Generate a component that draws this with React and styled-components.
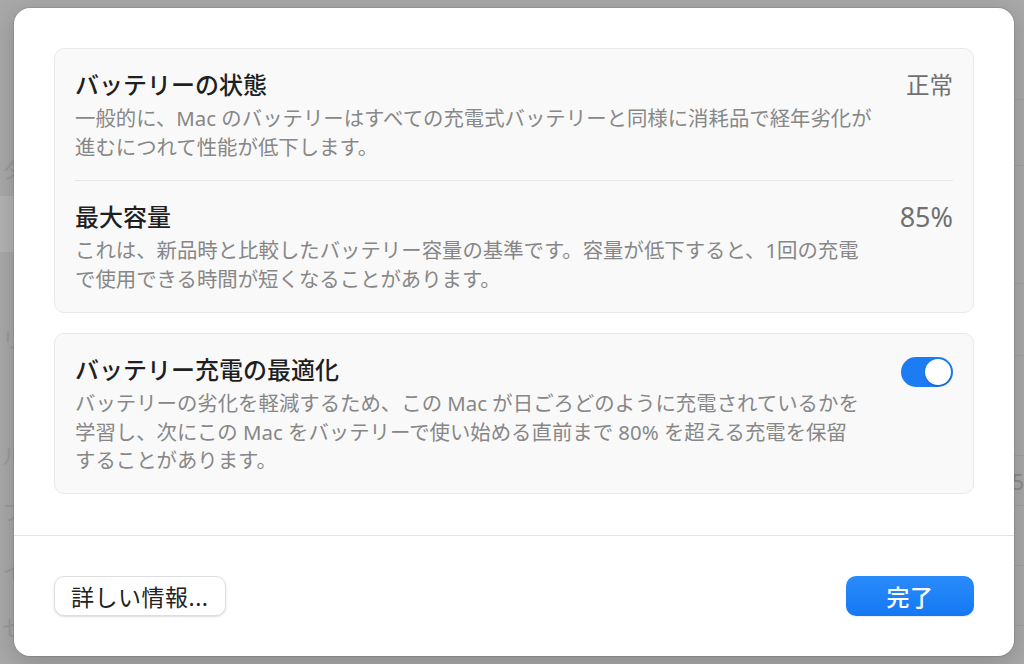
import React, { useState } from 'react';
import styled, { createGlobalStyle } from 'styled-components';

const GlobalStyle = createGlobalStyle`
  html, body {
    margin: 0;
    padding: 0;
    width: 1024px;
    height: 664px;
    overflow: hidden;
    background: #a8a8a8;
  }
  * {
    box-sizing: border-box;
  }
`;

const FONT = `"Noto Sans", "Noto Sans CJK JP", sans-serif`;

// Blurred settings window lying behind the sheet
const Backdrop = styled.div`
  position: relative;
  width: 1024px;
  height: 664px;
  display: flex;
  background: #a8a8a8;
  font-family: ${FONT};
  overflow: hidden;
`;

const Sidebar = styled.div`
  width: 240px;
  display: flex;
  flex-direction: column;
  padding-top: 140px;
`;

const SideItem = styled.div`
  height: ${(p) => p.h || 56}px;
  display: flex;
  align-items: center;
  padding-left: 2px;
  font-size: 22px;
  color: #9a9a9a;
  background: ${(p) => (p.active ? '#b2b2b2' : 'transparent')};
`;

const MainBehind = styled.div`
  flex: 1;
  display: flex;
  flex-direction: column;
  padding-top: 40px;
`;

const BehindRow = styled.div`
  height: ${(p) => p.h || 66}px;
  border-bottom: 1px solid #9f9f9f;
  display: flex;
  justify-content: flex-end;
  align-items: center;
  font-size: 22px;
  color: #8c8c8c;
`;

// The sheet dialog
const Sheet = styled.div`
  position: absolute;
  left: 14px;
  top: 8px;
  width: 1000px;
  height: 648px;
  background: #ffffff;
  border-radius: 16px;
  box-shadow: 0 0 0 1px rgba(0, 0, 0, 0.08), 0 6px 24px rgba(0, 0, 0, 0.18);
  display: flex;
  flex-direction: column;
  overflow: hidden;
`;

const Content = styled.div`
  padding: 40px 40px 40px;
  display: flex;
  flex-direction: column;
  gap: 20px;
`;

const Card = styled.div`
  background: #f9f9f9;
  border: 1px solid #e9e9e9;
  border-radius: 10px;
  padding: 0 20px;
  display: flex;
  flex-direction: column;
`;

const Row = styled.div`
  display: flex;
  align-items: flex-start;
  gap: 20px;
  padding: 21px 0 ${(p) => (p.last ? 18 : 19)}px;
  border-top: ${(p) => (p.divided ? '1px solid #e6e6e6' : 'none')};
`;

const TextBlock = styled.div`
  flex: 1;
  display: flex;
  flex-direction: column;
  gap: 4px;
`;

const Title = styled.div`
  font-size: 24px;
  line-height: 30px;
  font-weight: 500;
  color: #1f1f1f;
  white-space: nowrap;
`;

const Desc = styled.div`
  font-size: 20.4px;
  line-height: 28.5px;
  color: #878787;
  white-space: nowrap;
`;

const Value = styled.div`
  flex-shrink: 0;
  font-size: ${(p) => (p.latin ? 27 : 23.5)}px;
  line-height: 30px;
  color: #707070;
`;

const ToggleTrack = styled.button`
  flex-shrink: 0;
  margin-top: 2px;
  width: 52px;
  height: 30px;
  border-radius: 15px;
  border: none;
  padding: 2px;
  background: ${(p) => (p.on ? '#1b7cf4' : '#d9d9d9')};
  display: flex;
  justify-content: ${(p) => (p.on ? 'flex-end' : 'flex-start')};
  align-items: center;
  cursor: pointer;
`;

const ToggleKnob = styled.span`
  width: 26px;
  height: 26px;
  border-radius: 50%;
  background: #ffffff;
  box-shadow: 0 1px 2px rgba(0, 0, 0, 0.25);
`;

const Footer = styled.div`
  margin-top: auto;
  border-top: 1px solid #e3e3e3;
  padding: 40px 40px 40px;
  display: flex;
  justify-content: space-between;
  align-items: center;
`;

const Button = styled.button`
  height: 40px;
  min-width: ${(p) => p.minWidth || 0}px;
  padding: 0 16px;
  border-radius: 10px;
  font-family: ${FONT};
  font-size: 23px;
  font-weight: ${(p) => (p.primary ? 500 : 400)};
  letter-spacing: 0.5px;
  cursor: pointer;
  color: ${(p) => (p.primary ? '#ffffff' : '#222222')};
  background: ${(p) =>
    p.primary ? 'linear-gradient(#2a8bfb, #1379f3)' : '#ffffff'};
  border: ${(p) => (p.primary ? 'none' : '1px solid #dedede')};
  box-shadow: ${(p) =>
    p.primary
      ? '0 1px 1px rgba(0, 0, 0, 0.08)'
      : '0 1px 2px rgba(0, 0, 0, 0.14)'};
`;

const App = () => {
  const [optimized, setOptimized] = useState(true);

  return (
    <>
      <GlobalStyle />
      <Backdrop>
        <Sidebar>
          <SideItem>タ</SideItem>
          <SideItem active>&nbsp;</SideItem>
          <SideItem h={58}>&nbsp;</SideItem>
          <SideItem h={56}>リ</SideItem>
          <SideItem h={60}>&nbsp;</SideItem>
          <SideItem h={56}>ル</SideItem>
          <SideItem h={56}>フ</SideItem>
          <SideItem h={62}>イ</SideItem>
          <SideItem h={52}>セ</SideItem>
        </Sidebar>
        <MainBehind>
          <BehindRow h={60} />
          <BehindRow h={66} />
          <BehindRow h={118} />
          <BehindRow h={72} />
          <BehindRow h={100} />
          <BehindRow h={50}>5</BehindRow>
          <BehindRow h={60} />
          <BehindRow h={60} />
        </MainBehind>

        <Sheet>
          <Content>
            <Card>
              <Row>
                <TextBlock>
                  <Title>バッテリーの状態</Title>
                  <Desc>
                    一般的に、Mac のバッテリーはすべての充電式バッテリーと同様に消耗品で経年劣化が
                    <br />
                    進むにつれて性能が低下します。
                  </Desc>
                </TextBlock>
                <Value>正常</Value>
              </Row>
              <Row divided>
                <TextBlock>
                  <Title>最大容量</Title>
                  <Desc>
                    これは、新品時と比較したバッテリー容量の基準です。容量が低下すると、1回の充電
                    <br />
                    で使用できる時間が短くなることがあります。
                  </Desc>
                </TextBlock>
                <Value latin>85%</Value>
              </Row>
            </Card>

            <Card>
              <Row last>
                <TextBlock>
                  <Title>バッテリー充電の最適化</Title>
                  <Desc>
                    バッテリーの劣化を軽減するため、この Mac が日ごろどのように充電されているかを
                    <br />
                    学習し、次にこの Mac をバッテリーで使い始める直前まで 80% を超える充電を保留
                    <br />
                    することがあります。
                  </Desc>
                </TextBlock>
                <ToggleTrack
                  on={optimized ? 1 : 0}
                  onClick={() => setOptimized(!optimized)}
                  aria-label="バッテリー充電の最適化"
                >
                  <ToggleKnob />
                </ToggleTrack>
              </Row>
            </Card>
          </Content>

          <Footer>
            <Button>詳しい情報...</Button>
            <Button primary minWidth={128}>
              完了
            </Button>
          </Footer>
        </Sheet>
      </Backdrop>
    </>
  );
};

export default App;
